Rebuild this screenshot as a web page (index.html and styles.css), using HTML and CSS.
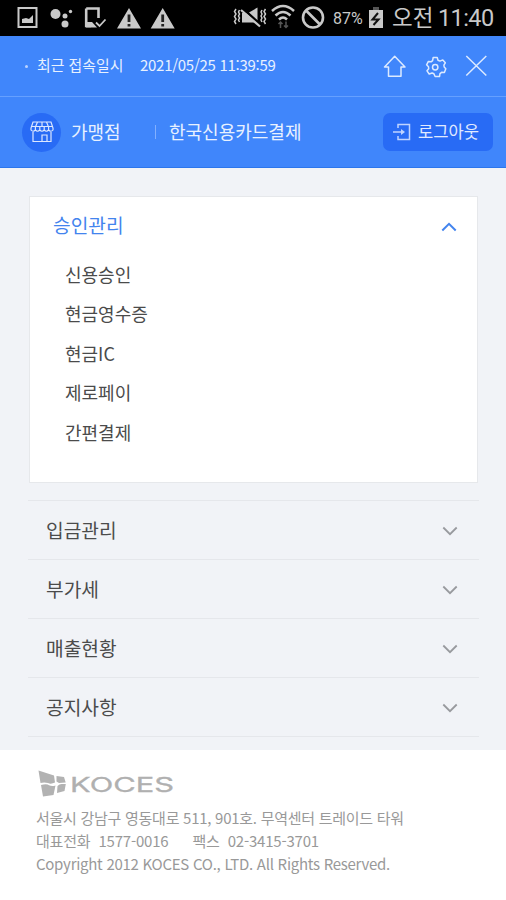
FILE: index.html
```html
<!DOCTYPE html>
<html lang="ko">
<head>
<meta charset="utf-8">
<title>KOCES</title>
<link rel="stylesheet" href="styles.css">
</head>
<body>
<div class="status">
  <svg class="status-left" width="176" height="36" viewBox="0 0 176 36">
    <g fill="none" stroke="#c9c9c9">
      <rect x="18.500" y="8" width="18" height="19" stroke-width="2"/>
      <path d="M86.200 8.500H98.500V18M91 26H86.200V8.500" stroke-width="2.600"/>
      <path d="M96 22.500l3.500 3.500 6-6.500" stroke-width="1.800"/>
    </g>
    <g fill="#c9c9c9">
      <path d="M22 23v-4l4-1 3 1 4-4v8z"/>
      <circle cx="55.500" cy="14" r="5"/><circle cx="65" cy="16" r="2.500"/><circle cx="65" cy="24" r="3.500"/><circle cx="70.500" cy="11.500" r="1.700"/>
      <path d="M86 22h6l5 5.500H86z"/>
      <path d="M129 8l12 20.500h-24zM162.700 8l12 20.500h-24z"/>
    </g>
    <path d="M129 14.500v7.500M129 24v2.500M162.700 14.500v7.500M162.700 24v2.500" stroke="#222" stroke-width="2.800"/>
  </svg>
  <svg class="status-mid" width="94" height="36" viewBox="232 0 94 36">
    <g fill="#c9c9c9"><path d="M242 13h4l10 9.500H242zM249 12.500l8.500-5v13z"/></g>
    <path d="M242.500 8.500l19 16.500" stroke="#000" stroke-width="2" fill="none"/>
    <g fill="none" stroke="#c9c9c9" stroke-width="1.500">
      <path d="M236 9l-1.500 2.500 1.500 2.500-1.500 2.500 1.500 2.500-1.500 2.500 1.500 2.500M239.500 10l-1 2 1 2-1 2 1 2-1 2 1 2M262 10l-1 2 1 2-1 2 1 2-1 2 1 2M265.500 9l-1.500 2.500 1.500 2.500-1.500 2.500 1.500 2.500-1.500 2.500 1.500 2.500"/>
      <path d="M241 10l19 16.500" stroke-width="2.200"/>
      <path d="M272 11q11-10 22 0M275.500 15.500q7.500-7 15 0M279 19.500q4-4 8 0" stroke-width="2.500"/>
      <circle cx="313" cy="17.500" r="10" stroke-width="2.600"/><path d="M306 10.500l14 14" stroke-width="2.600"/>
      <path d="M280.500 28v-6M278.500 24l2-2 2 2M286 21.500v6M284 25.500l2 2 2-2" stroke="#555"/>
    </g>
  </svg>
  <span class="battery-text">87%</span>
  <svg class="battery" width="16" height="22" viewBox="0 0 16 22">
    <path d="M1 3h4V0h6v3h4v18H1z" fill="#c9c9c9"/><path d="M5 0h6v3H5z" fill="#555"/>
    <path d="M10 6L4.500 12.500h6L5.500 18" fill="none" stroke="#111" stroke-width="2"/>
  </svg>
  <span class="clock-label">오전</span><span class="clock">11:40</span>
</div>

<header>
  <div class="topbar">
    <i class="dot"></i>
    <span class="last-label">최근 접속일시</span>
    <span class="last-time">2021/05/25 11:39:59</span>
    <svg class="tools" width="106" height="28" viewBox="382 52 106 28" fill="none" stroke="#dceaff" stroke-width="1.500">
      <path d="M388.500 67H384.500l10.200-10.700L405 67H401v9.300h-12.500z" stroke-linejoin="round"/>
      <path d="M433.200 57.500h4l.8 2.700 2 .9 2.800-1.200 2.500 2.900-1.400 2.400.3 1.800 1.600 1.700-1.400 3.700-2.800-.1-1.600 1.300-.5 2.900h-4.400l-1.200-2.700-1.800-.8-2.900 1-2.200-3.200 1.700-2.100-.2-2-1.900-1.900 1.800-3.400 2.700.4 1.500-1.200z" stroke-linejoin="round"/>
      <circle cx="435.200" cy="67.300" r="2.700"/>
      <path d="M466.300 56l20 19.500M486.300 56l-20 19.500"/>
    </svg>
  </div>
  <div class="storebar">
    <span class="store-icon"><svg width="24" height="22" viewBox="0 0 24 22" fill="none" stroke="#dce7ff" stroke-width="1.200">
      <path d="M3 1h18l2 6v2q-2 2.500-4.400 0-2.200 2.500-4.400 0-2.200 2.500-4.400 0-2.200 2.500-4.400 0Q3 11.500 1 9V7zM1.500 5.500h21M7.500 1L5.400 6v3M12 1v4.500M16.500 1l2.100 5v3M9.800 5.500v3.500M14.200 5.500v3.500M3 11v9.500h18V11M12 20v-6h5v6"/>
    </svg></span>
    <span class="store-label">가맹점</span>
    <i class="bar"></i>
    <span class="store-name">한국신용카드결제</span>
    <button class="logout"><svg width="20" height="18" viewBox="0 0 20 18" fill="none" stroke="#bfd3ff" stroke-width="1.500"><path d="M6 5V1.500h11.500v15H6V13M1 9h10"/><path d="M9 6l4 3-4 3z" fill="#bfd3ff" stroke="none"/></svg><span>로그아웃</span></button>
  </div>
</header>

<main>
  <section class="panel">
    <div class="panel-head"><span>승인관리</span><svg width="16" height="10" viewBox="0 0 16 10"><path d="M1.300 8.500L8 1.800l6.700 6.700"/></svg></div>
    <ul>
      <li>신용승인</li><li>현금영수증</li><li>현금IC</li><li>제로페이</li><li>간편결제</li>
    </ul>
  </section>
  <nav>
    <div class="row"><span>입금관리</span><svg width="16" height="10" viewBox="0 0 16 10"><path d="M1.300 1.500L8 8.200l6.700-6.700"/></svg></div>
    <div class="row"><span>부가세</span><svg width="16" height="10" viewBox="0 0 16 10"><path d="M1.300 1.500L8 8.200l6.700-6.700"/></svg></div>
    <div class="row"><span>매출현황</span><svg width="16" height="10" viewBox="0 0 16 10"><path d="M1.300 1.500L8 8.200l6.700-6.700"/></svg></div>
    <div class="row"><span>공지사항</span><svg width="16" height="10" viewBox="0 0 16 10"><path d="M1.300 1.500L8 8.200l6.700-6.700"/></svg></div>
  </nav>
</main>

<footer>
  <svg class="logo" width="140" height="28" viewBox="36 769 140 28">
    <g fill="#b2b2b2">
      <path d="M38.500 770.500l15.500 5 1 7q-4 2-7 .5-4-1-7.500 0z"/>
      <path d="M41 785q6-1.500 8 .3 3 1.500 6.500.2l-2 9.500-10.500 1.500z"/>
      <path d="M56.500 776l7.500 1 1.700 5.500-6.700.5-2.500-1.500zM57.500 786q2-2 4-2h4.300l-1.300 7-7.500 2z"/>
    </g>
    <text class="wordmark" x="70" y="792" textLength="104" lengthAdjust="spacingAndGlyphs">KOCES</text>
  </svg>
  <p class="address">서울시 강남구 영동대로 511, 901호. 무역센터 트레이드 타워</p>
  <p class="phones"><span>대표전화</span><span class="tel">1577-0016</span><span class="fax">팩스</span><span class="faxno">02-3415-3701</span></p>
  <p class="copy">Copyright 2012 KOCES CO., LTD. All Rights Reserved.</p>
</footer>
</body>
</html>
```
FILE: styles.css
```css
* { box-sizing: border-box; }
body {
  margin: 0;
  width: 506px;
  height: 900px;
  overflow: hidden;
  background: #fff;
  font-family: "Noto Sans CJK KR", sans-serif;
  display: flex;
  flex-direction: column;
}
svg { display: block; flex: none; }
span, p, li { white-space: nowrap; }
i { flex: none; }

.status {
  height: 36px;
  flex: none;
  background: #000;
  color: #c9c9c9;
  display: flex;
  align-items: center;
}
.status-mid { margin-left: 56px; }
.battery-text { margin-left: 7px; width: 35px; font: 16px/36px Roboto, sans-serif; padding-top: 2px; }
.battery { margin-top: -1px; }
.clock-label { margin-left: 8px; width: 46px; font-size: 22.500px; line-height: 34px; padding-bottom: 4px; }
.clock { font: 23.500px/36px Roboto, sans-serif; letter-spacing: -0.600px; }

header { flex: none; height: 132px; background: #4086fb; border-bottom: 1px solid #2c76ec; }
.topbar {
  height: 61px;
  display: flex;
  align-items: center;
  border-bottom: 1px solid #65a0ff;
  color: #e8f1ff;
  font-size: 15px;
}
.dot { width: 3px; height: 3px; margin: 1px 9px 0 25px; border-radius: 50%; background: #b9d3ff; }
.last-label { width: 103px; font-size: 14.900px; padding-bottom: 3px; }
.last-time { letter-spacing: -0.280px; padding-bottom: 3px; }
.tools { margin-left: auto; margin-right: 18px; }
.storebar { height: 70px; display: flex; align-items: center; color: #e8f1ff; font-size: 18px; padding: 0 13px 0 22px; }
.store-icon { width: 39px; height: 39px; border-radius: 50%; background: #286bf5; display: flex; align-items: center; justify-content: center; }
.store-label { margin-left: 10px; width: 84px; padding-bottom: 2px; }
.store-name { padding-bottom: 2px; }
.bar { width: 1px; height: 14px; background: #82b0ff; margin: 0 13px 0 0; }
.logout {
  margin-left: auto;
  width: 110px;
  height: 38px;
  border: 0;
  border-radius: 7px;
  background: #286bf5;
  color: #e0eaff;
  font: 16.600px/34px "Noto Sans CJK KR", sans-serif;
  padding: 0 0 0 9px;
  display: flex;
  align-items: center;
  gap: 6px;
}
.logout span { padding-bottom: 3px; }

main { flex: none; height: 582px; background: #f1f3f7; padding: 28px 27px 0 29px; }
.panel { height: 287px; width: 449px; background: #fff; border: 1px solid #e6e8eb; padding: 0 20px 0 23px; }
.panel-head { height: 58px; display: flex; align-items: center; justify-content: space-between; font-size: 19.200px; color: #4384ee; }
.panel-head span { padding-bottom: 3px; }
.panel-head svg { margin-top: 2px; }
.panel-head path { stroke: #4384ee; stroke-width: 2; fill: none; }
ul { list-style: none; margin: 0; padding: 0 0 0 12px; }
li { height: 39.400px; line-height: 39.400px; font-size: 18px; color: #4b4b4b; }
nav { margin: 17px 0 0 -1px; border-top: 1px solid #e5e7eb; }
.row {
  height: 59px;
  display: flex;
  align-items: center;
  justify-content: space-between;
  border-bottom: 1px solid #e5e7eb;
  padding: 0 21px 0 18px;
  font-size: 19.200px;
  color: #4b4b4b;
}
.row svg { margin-top: 1px; }
.row path { stroke: #989a9e; stroke-width: 1.800; fill: none; }

footer { flex: none; height: 150px; padding: 19px 0 0 36px; color: #999; }
.wordmark { font: 400 20px Inter, sans-serif; fill: #b0b0b0; stroke: #b0b0b0; stroke-width: 0.300px; }
footer p { margin: 0; font-size: 15px; line-height: 22.700px; height: 22.700px; }
footer .address { margin-top: 10.400px; letter-spacing: -0.270px; }
.phones { display: flex; letter-spacing: -0.200px; }
.tel { margin-left: 8px; }
.fax { margin-left: 24px; }
.faxno { margin-left: 8px; }
.copy { letter-spacing: -0.270px; }
```
